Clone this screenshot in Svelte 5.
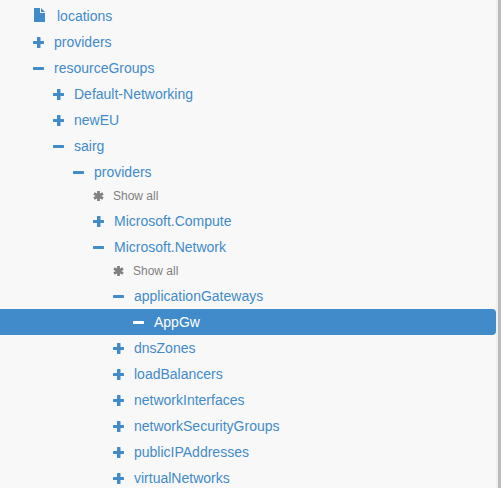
<script lang="ts">
  type Icon = 'file' | 'plus' | 'minus' | 'all';
  type Node = { id: number; label: string; depth: number; icon: Icon };

  const nodes: Node[] = [
    { id: 1, label: 'locations', depth: 0, icon: 'file' },
    { id: 2, label: 'providers', depth: 0, icon: 'plus' },
    { id: 3, label: 'resourceGroups', depth: 0, icon: 'minus' },
    { id: 4, label: 'Default-Networking', depth: 1, icon: 'plus' },
    { id: 5, label: 'newEU', depth: 1, icon: 'plus' },
    { id: 6, label: 'sairg', depth: 1, icon: 'minus' },
    { id: 7, label: 'providers', depth: 2, icon: 'minus' },
    { id: 8, label: 'Show all', depth: 3, icon: 'all' },
    { id: 9, label: 'Microsoft.Compute', depth: 3, icon: 'plus' },
    { id: 10, label: 'Microsoft.Network', depth: 3, icon: 'minus' },
    { id: 11, label: 'Show all', depth: 4, icon: 'all' },
    { id: 12, label: 'applicationGateways', depth: 4, icon: 'minus' },
    { id: 13, label: 'AppGw', depth: 5, icon: 'minus' },
    { id: 14, label: 'dnsZones', depth: 4, icon: 'plus' },
    { id: 15, label: 'loadBalancers', depth: 4, icon: 'plus' },
    { id: 16, label: 'networkInterfaces', depth: 4, icon: 'plus' },
    { id: 17, label: 'networkSecurityGroups', depth: 4, icon: 'plus' },
    { id: 18, label: 'publicIPAddresses', depth: 4, icon: 'plus' },
    { id: 19, label: 'virtualNetworks', depth: 4, icon: 'plus' }
  ];

  let selectedId = $state(13);
</script>

<nav class="sidebar">
  <ul class="tree">
    {#each nodes as node (node.id)}
      <li>
        <button
          class="node {node.icon}"
          class:selected={node.id === selectedId}
          style="padding-left: {32 + node.depth * 20}px"
          onclick={() => (selectedId = node.id)}
        >
          <svg class="icon" viewBox="0 0 14 14" aria-hidden="true">
            {#if node.icon === 'file'}
              <path d="M2.500-1H8v5h5v8.500q0 .5-.5.5h-10q-.5 0-.5-.5v-13q0-.5.5-.5zM9-1l4 4H9z" />
            {:else if node.icon === 'plus'}
              <path d="M5.400 2h2.700q.4 0 .4.400V6h3.100q.4 0 .4.400v2.200q0 .4-.4.400H8.500v3.600q0 .4-.4.400H5.400q-.4 0-.4-.4V9H1.400q-.4 0-.4-.4V6.400q0-.4.400-.4H5V2.400q0-.4.400-.4z" />
            {:else if node.icon === 'minus'}
              <rect x="1" y="6" width="11" height="3" rx=".4" />
            {:else}
              <path d="M6.500 2v10M2 4.500l9 5M2 9.500l9-5" />
            {/if}
          </svg>
          <span>{node.label}</span>
        </button>
      </li>
    {/each}
  </ul>
</nav>

<style>
  :global(body) {
    margin: 0;
    background: #bbb;
  }

  .sidebar {
    height: 100vh;
    margin-right: 3px;
    border-right: 2px solid #efefef;
    box-sizing: border-box;
    overflow: hidden;
    background: #f8f8f8;
    font-family: "Liberation Sans", Arial, sans-serif;
  }

  .tree {
    list-style: none;
    margin: 0;
    padding: 3px 0 0;
  }

  .node {
    display: flex;
    align-items: center;
    gap: 8px;
    width: 100%;
    height: 26px;
    padding: 0;
    border: 0;
    border-radius: 0 4px 4px 0;
    background: none;
    color: #428bca;
    font-family: inherit;
    font-size: 14px;
    line-height: 20px;
    text-align: left;
    cursor: pointer;
  }

  .node.file {
    gap: 11px;
  }

  .node.all {
    gap: 7px;
    height: 23px;
    padding-bottom: 1px;
    color: #808080;
    font-size: 12px;
  }

  .node.selected {
    background: #428bca;
    color: #fff;
  }

  .icon {
    flex: none;
    width: 14px;
    height: 14px;
    overflow: visible;
    fill: currentColor;
  }

  .all .icon {
    stroke: currentColor;
    stroke-width: 2.8;
  }
</style>
